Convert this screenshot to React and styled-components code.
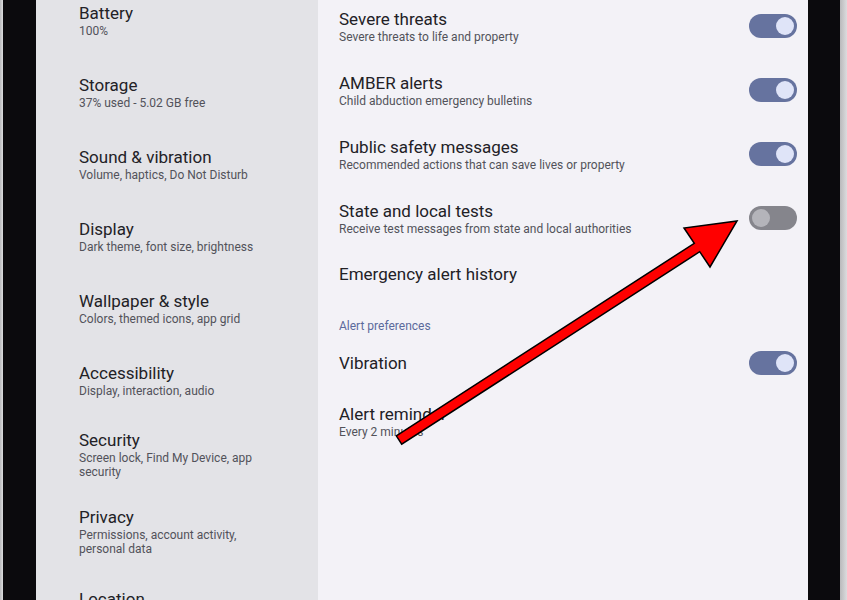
import styled, { createGlobalStyle } from "styled-components";

const GlobalStyle = createGlobalStyle`
  body {
    margin: 0;
    font-family: Roboto, "Noto Sans", sans-serif;
  }
`

const Screen = styled.div`
  position: relative;
  display: flex;
  width: 847px;
  height: 600px;
  overflow: hidden;
  background: #0b0b0d;
`

const Edge = styled.div`
  width: ${(p) => p.$w}px;
  flex-shrink: 0;
  background: linear-gradient(90deg, #b9b9bb, #dcdcde);
`

const Bezel = styled.div`
  width: ${(p) => p.$w}px;
  flex-shrink: 0;
  background: #0b0a0d;
`

const LeftPanel = styled.div`
  width: 282px;
  flex-shrink: 0;
  background: #e3e3e7;
  padding-left: 43px;
  box-sizing: border-box;
`

const RightPanel = styled.div`
  width: 490px;
  flex-shrink: 0;
  background: #f3f2f7;
  padding: 0 11px 0 21px;
  box-sizing: border-box;
`

const List = styled.div`
  display: flex;
  flex-direction: column;
  margin-top: ${(p) => p.$offset}px;
`

const Row = styled.div`
  display: flex;
  align-items: center;
  justify-content: space-between;
  min-height: ${(p) => p.$min}px;
  padding: 14px 0;
  box-sizing: border-box;
`

const Texts = styled.div`
  display: flex;
  flex-direction: column;
`

const Title = styled.div`
  font-size: 17px;
  line-height: 20px;
  color: #222126;
  margin-bottom: 1px;
`

const Sub = styled.div`
  font-size: 12px;
  line-height: 14px;
  color: #52525a;
  max-width: ${(p) => (p.$wrap ? "200px" : "none")};
`

const Header = styled.div`
  padding: 20px 0 4px;
  font-size: 12px;
  line-height: 14px;
  color: #5b6a9c;
`

const Toggle = styled.span`
  position: relative;
  width: 48px;
  height: 24px;
  border-radius: 12px;
  flex-shrink: 0;
  background: ${(p) => (p.$on ? "#66739f" : "#85858c")};

  &::after {
    content: "";
    position: absolute;
    top: 3px;
    left: ${(p) => (p.$on ? "27px" : "3px")};
    width: 18px;
    height: 18px;
    border-radius: 50%;
    background: ${(p) => (p.$on ? "#dfe4f8" : "#b4b4ba")};
  }
`

const Arrow = styled.svg`
  position: absolute;
  left: 0;
  top: 0;
  pointer-events: none;
`

const settings = [
  { title: "Battery", sub: "100%" },
  { title: "Storage", sub: "37% used - 5.02 GB free" },
  { title: "Sound & vibration", sub: "Volume, haptics, Do Not Disturb" },
  { title: "Display", sub: "Dark theme, font size, brightness" },
  { title: "Wallpaper & style", sub: "Colors, themed icons, app grid" },
  { title: "Accessibility", sub: "Display, interaction, audio" },
  { title: "Security", sub: "Screen lock, Find My Device, app security" },
  { title: "Privacy", sub: "Permissions, account activity, personal data" },
  { title: "Location", sub: "On - 3 apps have access to location" },
]

const alerts = [
  { title: "Severe threats", sub: "Severe threats to life and property", on: true },
  { title: "AMBER alerts", sub: "Child abduction emergency bulletins", on: true },
  { title: "Public safety messages", sub: "Recommended actions that can save lives or property", on: true },
  { title: "State and local tests", sub: "Receive test messages from state and local authorities", on: false },
  { title: "Emergency alert history", min: 48 },
]

const AlertRow = ({ title, sub, on, min = 64 }) => (
  <Row $min={min}>
    <Texts>
      <Title>{title}</Title>
      {sub && <Sub>{sub}</Sub>}
    </Texts>
    {on !== undefined && <Toggle $on={on} />}
  </Row>
)

export default function App() {
  return (
    <Screen>
      <GlobalStyle />
      <Edge $w={3} />
      <Bezel $w={33} />
      <LeftPanel>
        <List $offset={-16}>
          {settings.map((s) => (
            <Row key={s.title} $min={72}>
              <Texts>
                <Title>{s.title}</Title>
                <Sub $wrap>{s.sub}</Sub>
              </Texts>
            </Row>
          ))}
        </List>
      </LeftPanel>
      <RightPanel>
        <List $offset={-6}>
          {alerts.map((a) => (
            <AlertRow key={a.title} {...a} />
          ))}
          <Header>Alert preferences</Header>
          <AlertRow title="Vibration" on={true} min={52} />
          <AlertRow title="Alert reminder" sub="Every 2 minutes" />
        </List>
      </RightPanel>
      <Bezel $w={32} />
      <Edge $w={7} />
      <Arrow width="847" height="600" viewBox="0 0 847 600">
        <polygon
          points="396.3,435.8 694.3,243.3 684,228 737,221 710,267 699.7,251.7 401.7,444.2"
          fill="#ff0000"
          stroke="#000"
          strokeWidth="1.5"
          strokeLinejoin="miter"
        />
      </Arrow>
    </Screen>
  )
}
